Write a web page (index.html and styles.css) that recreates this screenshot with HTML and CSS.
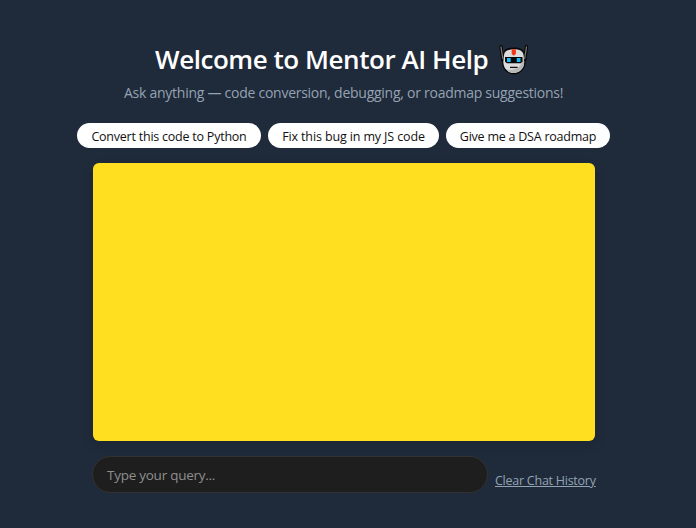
FILE: index.html
```html
<!DOCTYPE html>
<html lang="en">
<head>
<meta charset="utf-8">
<title>Mentor AI Help</title>
<link rel="stylesheet" href="styles.css">
</head>
<body>
<main class="page">
  <h1 class="title"><span>Welcome to Mentor AI Help</span>
    <svg class="robot" viewBox="0 0 30 30" aria-hidden="true">
      <path d="M2 1.800 3.800 15M27.500 1.800 25.700 15" fill="none" stroke="#080808" stroke-width="3.400" stroke-linecap="round"/>
      <path d="M4 9C4.500 4 9 2.500 14.800 2.500S25 4 25.500 9L26.500 17C26.500 25 20 29.500 14.800 29.500S3 25 3 17Z" fill="#080808"/>
      <path d="M2 2 3.800 13.500M27.500 2 25.700 13.500" fill="none" stroke="#777" stroke-width="1.300" stroke-linecap="round"/>
      <path d="M5 10C5.500 6 9 4.300 14.800 4.300S24 6 24.500 10L25.200 17C25 24.500 19.500 28 14.800 28S4.500 24.500 4.300 17Z" fill="#dcdcdc"/>
      <path d="M24.500 10 25.200 17C25 24.500 19.500 28 14.800 28S9 26.500 7.500 24.500C13 26 21.500 24 22.700 17Z" fill="#b8b8b8"/>
      <path d="M12.700 4.300h4.200V9l-2.100 1.700L12.700 9Z" fill="#f03a17"/>
      <path d="M6 12h17.500v4.500L21.800 18.300H7.800L6 16.500Z" fill="#080808"/>
      <path d="M8 13h3.700v4H8ZM17.800 13h3.700v4h-3.700Z" fill="#16b9ed"/>
      <path d="M11 22.400h7.600" stroke="#111" stroke-width="1.300"/>
    </svg>
  </h1>
  <p class="subtitle">Ask anything — code conversion, debugging, or roadmap suggestions!</p>
  <div class="suggestions">
    <button class="chip chip-python">Convert this code to Python</button>
    <button class="chip chip-bug">Fix this bug in my JS code</button>
    <button class="chip chip-roadmap">Give me a DSA roadmap</button>
  </div>
  <section class="chat"></section>
  <form class="composer">
    <input class="query" type="text" placeholder="Type your query...">
    <a class="clear">Clear Chat History</a>
  </form>
</main>
</body>
</html>
```
FILE: styles.css
```css
* { box-sizing: border-box; }
body {
  margin: 0;
  height: 528px;
  overflow: hidden;
  background: #1f2a3a;
  font-family: "Segoe UI", "Open Sans", "Noto Sans", sans-serif;
}
.page {
  width: 534px;
  margin-left: 77px;
  padding-top: 41px;
}
.title {
  display: flex;
  align-items: center;
  height: 36px;
  margin: 0 0 0 78px;
  color: #fff;
  font-size: 26px;
  font-weight: 600;
  line-height: 36px;
  letter-spacing: -.45px;
  white-space: nowrap;
}
.title span { width: 344px; flex: none; }
.robot { width: 30px; height: 30px; flex: none; margin-top: 2px; }
.subtitle {
  margin: 5px 0 0 47px;
  height: 22px;
  color: #94a3b3;
  font-size: 14px;
  line-height: 22px;
  letter-spacing: -.26px;
  white-space: nowrap;
}
.suggestions {
  display: flex;
  gap: 7px;
  margin-top: 19px;
}
.chip {
  height: 25px;
  padding: 2px 0 0;
  border: 0;
  border-radius: 13px;
  background: #fff;
  color: #111;
  font-family: inherit;
  font-size: 12.5px;
  line-height: 23px;
  letter-spacing: -.23px;
  white-space: nowrap;
}
.chip-python { width: 184px; }
.chip-bug { width: 171px; letter-spacing: -.13px; }
.chip-roadmap { width: 164px; }
.chat {
  width: 502px;
  height: 278px;
  margin: 15px 0 0 16px;
  border-radius: 6px;
  background: #ffdf20;
  box-shadow: 0 4px 12px rgba(0, 0, 0, .1);
}
.composer {
  display: flex;
  align-items: flex-start;
  gap: 7px;
  margin: 15px 0 0 15px;
}
.query {
  width: 396px;
  height: 37px;
  padding: 0 14px;
  border: 1px solid #333;
  border-radius: 19px;
  background: #1e1e1e;
  color: #fff;
  font-family: inherit;
  font-size: 13.5px;
  letter-spacing: -.26px;
}
.query::placeholder { color: #8e8e8e; opacity: 1; }
.clear {
  margin-top: 16px;
  color: #94a3b3;
  font-size: 12.5px;
  line-height: 18px;
  letter-spacing: -.25px;
  text-decoration: underline;
  white-space: nowrap;
}
```
